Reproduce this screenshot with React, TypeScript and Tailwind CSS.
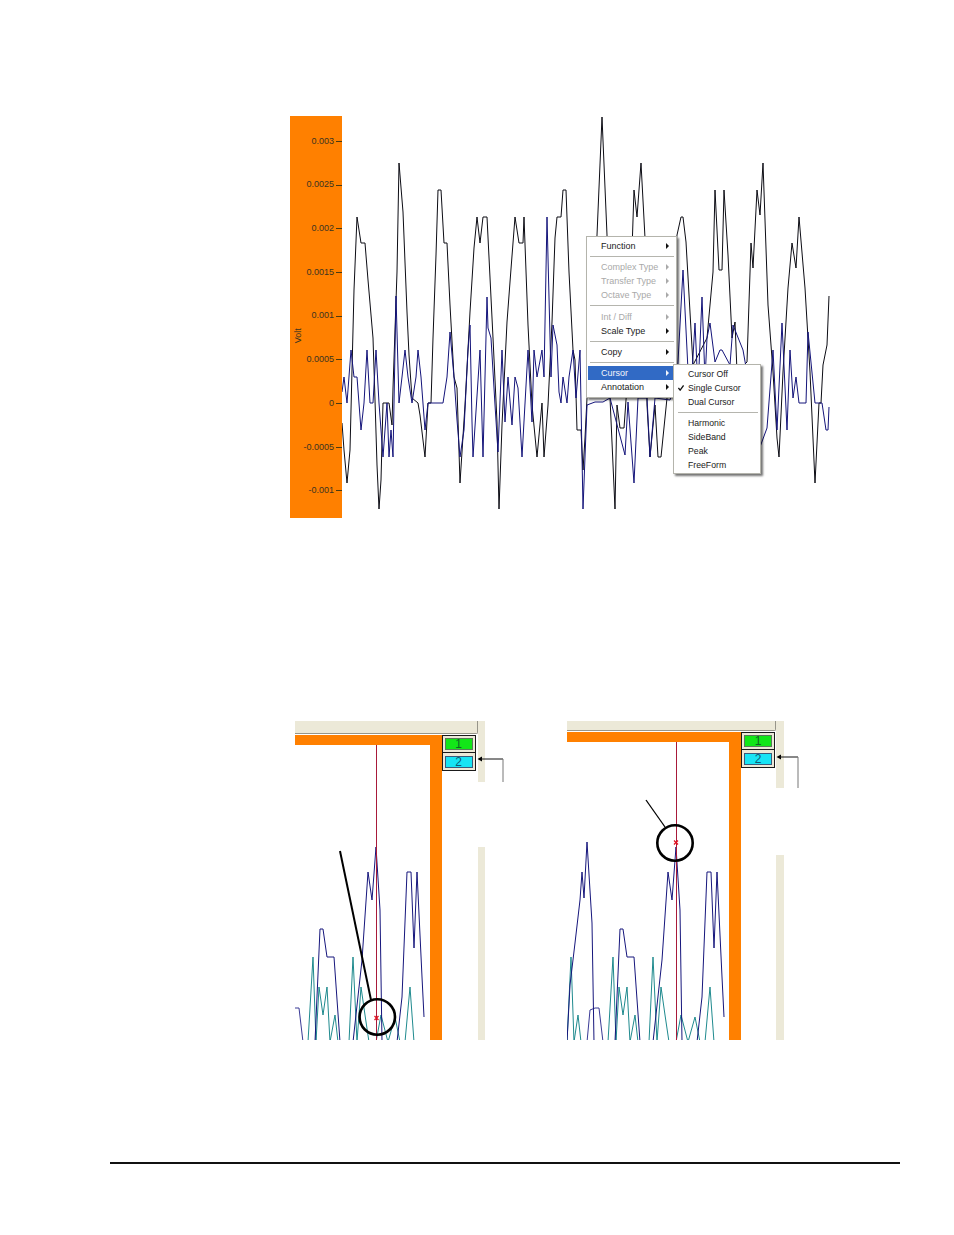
const blackPts = "342,423 344,450 347,483 350,450 352,370 354,290 357,217 361,243 365,243 368,280 373,338 375,400 377,465 379,509 381,480 383,403 389,403 392,425 393,388 397,272 399,163 403,212 407,312 409,355 412,398 418,403 420,415 425,457 428,403 431,403 433,338 436,255 438,190 441,190 444,243 447,243 450,305 454,377 457,388 460,483 465,405 470,312 474,248 477,217 480,243 483,217 487,217 493,338 497,422 499,509 502,425 507,322 510,282 515,217 519,243 523,243 524,217 528,325 532,405 537,457 542,403 544,457 548,405 552,322 555,238 557,217 561,217 563,190 566,190 569,272 573,350 575,360 577,430 581,430 583,470 585,438 590,338 597,235 602,117 607,235 610,398 615,509 617,405 620,428 624,428 628,372 634,190 637,217 641,163 645,238 647,405 650,457 655,405 658,457 661,457 667,398 673,272 677,235 681,217 683,217 686,242 693,365 707,338 713,272 715,190 719,270 722,270 724,190 728,255 732,338 735,322 737,372 747,362 751,243 753,268 757,190 760,215 763,163 768,305 773,372 777,438 779,457 783,372 788,288 792,243 796,268 799,217 805,288 810,372 815,483 819,403 821,403 823,365 827,345 829,296";
const navyPts = "342,392 344,377 347,403 351,350 354,377 357,377 361,430 364,403 367,350 370,403 373,403 376,350 379,403 381,430 383,457 385,430 387,403 389,457 391,430 393,457 396,296 399,403 402,377 405,350 408,377 412,403 416,377 418,350 421,377 425,430 428,403 431,403 438,403 443,403 447,377 450,332 454,377 457,420 460,457 464,430 468,350 470,325 472,422 473,457 480,350 483,457 487,297 488,328 491,338 495,405 498,452 502,350 505,422 508,377 512,425 515,377 518,388 522,457 528,350 532,422 534,350 537,377 542,350 544,377 547,217 551,377 553,325 557,345 559,392 561,403 563,377 567,403 569,377 573,350 576,398 580,350 583,509 587,405 595,402 603,402 610,398 625,455 628,402 634,483 638,398 647,398 650,457 655,398 670,400 677,380 683,270 688,370 691,390 695,323 698,390 702,297 705,380 707,338 710,323 715,362 720,350 722,350 730,365 733,325 743,350 760,447 767,428 773,350 777,430 782,323 787,430 790,350 793,398 796,377 799,403 806,403 808,332 815,403 822,403 826,430 828,430 829,407";
const envPts = "267,1042 270,985 275,943 280,900 282,872 284,898 287,842 292,923 294,1042 315,1042 320,929 323,929 327,957 334,957 340,1042 353,1042 362,960 368,872 372,900 376,847 380,910 382,1042 397,1042 402,997 407,872 411,872 414,948 417,872 422,977 424,1017";
const midPts = "287,1042 290,1010 295,1008 299,1008 303,1042";
const tealPts = "267,1042 271,957 274,1042 278,1015 281,1042 308,1042 313,957 316,1042 319,987 323,1015 327,987 330,1042 335,1015 338,1042 349,1042 353,957 357,1042 361,987 365,1015 369,1042 376,1042 381,1015 388,1042 395,1017 400,1042 405,1042 410,987 414,1042";
const tickLabels = ["0.003", "0.0025", "0.002", "0.0015", "0.001", "0.0005", "0", "-0.0005", "-0.001"];

function Check() {
  return (
    <svg width="6" height="6" viewBox="0 0 7 7">
      <path d="M0.5 3.5 L2.5 6 L6.5 0.5" fill="none" stroke="#111" strokeWidth="1.5" />
    </svg>
  );
}

function MenuRow({ label, dim, active }: { label: string; dim?: boolean; active?: boolean }) {
  const tone = active ? "bg-[#316ac5] text-[#f4f6fb]" : dim ? "text-[#a9a9a9]" : "text-[#1a1a1a]";
  return (
    <div className={`flex h-[14px] items-center pl-[13px] text-[9px] leading-[14px] ${tone}`}>
      <span className="flex-1 whitespace-nowrap">{label}</span>
      <svg width="3" height="6" viewBox="0 0 3 6" className="mr-[7px]">
        <path d="M0 0 L3 3 L0 6 Z" fill={dim ? "#a9a9a9" : active ? "#f4f6fb" : "#111"} />
      </svg>
    </div>
  );
}

function Sep() {
  return (
    <div className="flex h-[7.33px] items-center px-[2px]">
      <div className="h-px w-full bg-[#b5b5ae]" />
    </div>
  );
}

function SubRow({ label, check }: { label: string; check?: boolean }) {
  return (
    <div className="flex h-[14px] items-center text-[8.7px] leading-[14px] text-[#1a1a1a]">
      <span className="flex w-[12px] shrink-0 items-center pl-[2px]">{check && <Check />}</span>
      <span className="whitespace-nowrap">{label}</span>
    </div>
  );
}

function ContextMenu() {
  return (
    <div className="absolute left-[296px] top-[120px] h-[162px] w-[91px] border border-[#b4b4ac] bg-white py-[2px] pl-[1px] shadow-[2px_2px_2px_rgba(0,0,0,0.55)]">
      <MenuRow label="Function" />
      <Sep />
      <MenuRow label="Complex Type" dim />
      <MenuRow label="Transfer Type" dim />
      <MenuRow label="Octave Type" dim />
      <Sep />
      <MenuRow label="Int / Diff" dim />
      <MenuRow label="Scale Type" />
      <Sep />
      <MenuRow label="Copy" />
      <Sep />
      <MenuRow label="Cursor" active />
      <MenuRow label="Annotation" />
      <div className="absolute left-[86px] top-[127px] z-10 h-[110px] w-[88px] border border-[#b4b4ac] bg-white py-[2px] pl-[2px] shadow-[2px_2px_2px_rgba(0,0,0,0.55)]">
        <SubRow label="Cursor Off" />
        <SubRow label="Single Cursor" check />
        <SubRow label="Dual Cursor" />
        <Sep />
        <SubRow label="Harmonic" />
        <SubRow label="SideBand" />
        <SubRow label="Peak" />
        <SubRow label="FreeForm" />
      </div>
    </div>
  );
}

function TopFigure() {
  return (
    <div className="relative ml-[290px] flex h-[402px] w-[542px]">
      <div className="relative flex h-[402px] w-[52px] flex-col bg-[#ff8000] pt-[3.6px]">
        {tickLabels.map((t) => (
          <div key={t} className="flex h-[43.7px] shrink-0 items-center justify-end gap-[2px] text-[9px] text-[#3a3320]">
            <span>{t}</span>
            <span className="h-px w-[6px] bg-[#4a3a10]" />
          </div>
        ))}
        <span className="absolute left-[1px] top-[213px] -rotate-90 text-[9px] text-[#3a3320]">Volt</span>
      </div>
      <svg width="490" height="402" viewBox="342 116 490 402" className="block">
        <polyline points={blackPts} fill="none" stroke="#0c0c14" strokeWidth="1" />
        <polyline points={navyPts} fill="none" stroke="#14147a" strokeWidth="1" />
      </svg>
      <ContextMenu />
    </div>
  );
}

function Plot({ viewBox, w, h, circle, dot, call, callWidth }: { viewBox: string; w: number; h: number; circle: [number, number]; dot: [number, number]; call: [number, number, number, number]; callWidth: number }) {
  const top = viewBox.split(" ")[1];
  return (
    <svg width={w} height={h} viewBox={viewBox} className="block">
      <polyline points={tealPts} fill="none" stroke="#1f8a8e" strokeWidth="1" />
      <polyline points={midPts} fill="none" stroke="#3a3a96" strokeWidth="1" />
      <polyline points={envPts} fill="none" stroke="#16167c" strokeWidth="1" />
      <line x1="376.5" y1={top} x2="376.5" y2="1040" stroke="#a81a3a" strokeWidth="1" />
      <path d={`M${dot[0] - 2} ${dot[1] - 2} L${dot[0] + 2} ${dot[1] + 2} M${dot[0] + 2} ${dot[1] - 2} L${dot[0] - 2} ${dot[1] + 2}`} stroke="#e01020" strokeWidth="1.3" />
      <line x1={call[0]} y1={call[1]} x2={call[2]} y2={call[3]} stroke="#000" strokeWidth={callWidth} />
      <circle cx={circle[0]} cy={circle[1]} r="17.7" fill="none" stroke="#000" strokeWidth="2.6" />
    </svg>
  );
}

function Legend() {
  return (
    <div className="flex h-[36px] w-[34px] flex-col">
      <div className="flex h-[18px] items-center justify-center border-[1.5px] border-[#1a1a1a] bg-[#ece9d8]">
        <div className="flex h-[12px] w-[28px] items-center justify-center border border-[#5a7a5a] bg-[#12e618] text-[12px] leading-none text-[#0f6424]">1</div>
      </div>
      <div className="flex h-[18px] items-center justify-center border-[1.5px] border-t-0 border-[#1a1a1a] bg-[#ece9d8]">
        <div className="flex h-[12px] w-[28px] items-center justify-center border border-[#3a5a7a] bg-[#18e4f4] text-[12px] leading-none text-[#0f5c74]">2</div>
      </div>
    </div>
  );
}

function Callout({ x, y, w, h }: { x: string; y: string; w: number; h: number }) {
  return (
    <svg width={w} height={h} viewBox={`0 0 ${w} ${h}`} className={`absolute ${x} ${y}`}>
      <path d="M0.5 3 L5 0.5 L5 5.5 Z" fill="#000" />
      <path d={`M4 3 H${w - 1}`} stroke="#111" strokeWidth="1" fill="none" />
      <path d={`M${w - 1} 3 V${h}`} stroke="#777" strokeWidth="1" fill="none" />
    </svg>
  );
}

function LeftFigure() {
  return (
    <div className="relative flex w-[272px]">
      <div className="flex w-[183px] flex-col">
        <div className="h-[13px] rounded-br-[2px] border-r border-b border-[#97958a] bg-[#ece9d8]" />
        <div className="mt-[1px] flex">
          <div className="h-[305px] w-[146.5px] border-t-[10px] border-r-[12.5px] border-[#ff8000]">
            <Plot viewBox="295 745 134 295" w={134} h={295} circle={[377.3, 1017]} dot={[376.5, 1018]} call={[340, 851, 371, 1000]} callWidth={2} />
          </div>
          <Legend />
        </div>
      </div>
      <div className="flex w-[7px] flex-col">
        <div className="h-[61px] bg-[#ece9d8]" />
        <div className="mt-[65px] h-[193px] bg-[#ece9d8]" />
      </div>
      <Callout x="left-[182px]" y="top-[35px]" w={27} h={26} />
    </div>
  );
}

function RightFigure() {
  return (
    <div className="relative flex w-[240px]">
      <div className="flex w-[209px] flex-col">
        <div className="h-[10px] rounded-br-[2px] border-r border-b border-[#97958a] bg-[#ece9d8]" />
        <div className="mt-[1px] flex">
          <div className="h-[308px] w-[174px] border-t-[10px] border-r-[12px] border-[#ff8000]">
            <Plot viewBox="267 742 162 298" w={162} h={298} circle={[375, 843]} dot={[376, 842.5]} call={[346, 800, 365, 827]} callWidth={1.3} />
          </div>
          <Legend />
        </div>
      </div>
      <div className="flex w-[8px] flex-col">
        <div className="h-[67px] bg-[#ece9d8]" />
        <div className="mt-[67px] h-[185px] bg-[#ece9d8]" />
      </div>
      <Callout x="left-[209px]" y="top-[33px]" w={23} h={34} />
    </div>
  );
}

export default function App() {
  return (
    <div className="h-[1235px] w-[954px] overflow-hidden bg-white pt-[116px] font-['Liberation_Sans',Arial,sans-serif]">
      <TopFigure />
      <div className="ml-[295px] mt-[203px] flex h-[319px]">
        <LeftFigure />
        <RightFigure />
      </div>
      <div className="ml-[110px] mt-[122px] h-[2px] w-[790px] bg-[#111]" />
    </div>
  );
}
